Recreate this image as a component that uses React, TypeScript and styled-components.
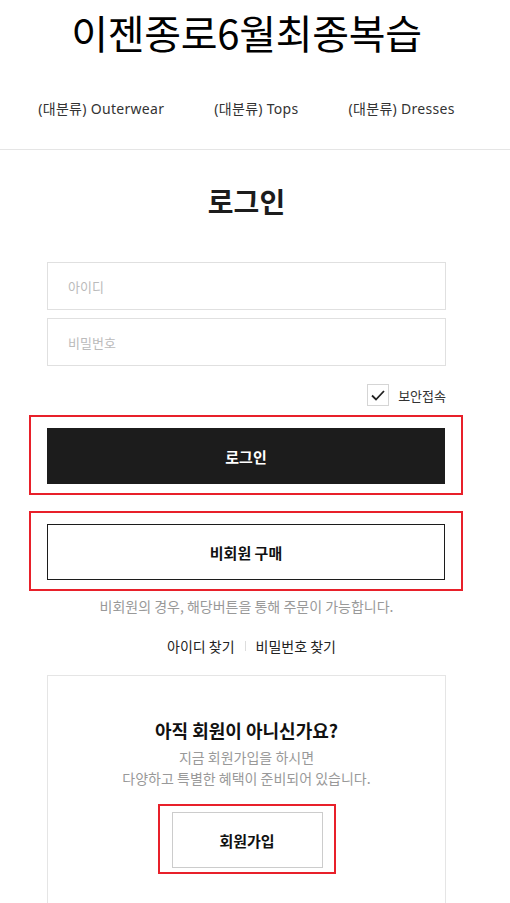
import styled, { createGlobalStyle } from "styled-components";

const GlobalStyle = createGlobalStyle`
  html, body {
    margin: 0;
    padding: 0;
    background: #fff;
  }
  body {
    font-family: "Noto Sans CJK KR", "Noto Sans", sans-serif;
    color: #222;
  }
`;

const Page = styled.div`
  width: 510px;
  height: 903px;
  overflow: hidden;
`;

const Header = styled.header`
  width: 493px;
  display: flex;
  flex-direction: column;
  align-items: center;
`;

const Logo = styled.h1`
  margin: 0;
  height: 66px;
  font-size: 40px;
  font-weight: 400;
  line-height: 64px;
  color: #000;
  letter-spacing: -0.3px;
`;

const Nav = styled.nav`
  display: flex;
  gap: 50px;
  height: 83px;
  align-items: center;
`;

const NavItem = styled.a`
  font-family: "Noto Sans", "Noto Sans CJK KR", sans-serif;
  font-size: 14px;
  letter-spacing: 0.3px;
  color: #333;
  text-decoration: none;
`;

const Divider = styled.hr`
  margin: 0;
  border: 0;
  border-top: 1px solid #e5e5e5;
`;

const Content = styled.main`
  width: 399px;
  margin-left: 47px;
  display: flex;
  flex-direction: column;
`;

const Title = styled.h2`
  margin: 0;
  padding-top: 31px;
  height: 48px;
  text-align: center;
  font-size: 28px;
  font-weight: 700;
  line-height: 40px;
  color: #1c1c1c;
`;

const Field = styled.input<{ $top: number }>`
  box-sizing: border-box;
  width: 100%;
  height: 48px;
  margin-top: ${(p) => p.$top}px;
  border: 1px solid #e0e0e0;
  padding: 0 20px;
  font-family: inherit;
  font-size: 13px;
  outline: none;
  &::placeholder {
    color: #bbb;
  }
`;

const SecureRow = styled.label`
  display: flex;
  justify-content: flex-end;
  align-items: center;
  gap: 9px;
  margin-top: 18px;
  font-size: 13px;
  color: #333;
`;

const CheckBox = styled.span`
  box-sizing: border-box;
  width: 22px;
  height: 22px;
  border: 1px solid #d5d5d5;
  display: flex;
  align-items: center;
  justify-content: center;
`;

const Highlight = styled.div<{ $top: number }>`
  margin: ${(p) => p.$top}px -17px 0 -18px;
  padding: 11px 16px 9px 16px;
  border: 2px solid #e8202a;
`;

const Button = styled.button<{ $dark?: boolean }>`
  box-sizing: border-box;
  width: 100%;
  height: 56px;
  display: flex;
  align-items: center;
  justify-content: center;
  font-family: inherit;
  font-size: 15px;
  font-weight: 700;
  cursor: pointer;
  background: ${(p) => (p.$dark ? "#1c1c1c" : "#fff")};
  color: ${(p) => (p.$dark ? "#fff" : "#111")};
  border: 1px solid #1c1c1c;
`;

const Notice = styled.p`
  margin: 5px 0 0;
  text-align: center;
  font-size: 14px;
  color: #999;
  line-height: 20px;
`;

const FindLinks = styled.div`
  display: flex;
  justify-content: center;
  align-items: center;
  margin-top: 20px;
  padding-left: 10px;
  font-size: 14px;
  line-height: 20px;
  color: #222;
`;

const Sep = styled.span`
  display: inline-block;
  width: 1px;
  height: 10px;
  background: #ddd;
  margin: 0 10px;
`;

const JoinBox = styled.section`
  margin-top: 19px;
  border: 1px solid #e5e5e5;
  border-bottom: 0;
  padding: 41px 0 40px;
  display: flex;
  flex-direction: column;
  align-items: center;
`;

const JoinTitle = styled.h3`
  margin: 0;
  font-size: 18px;
  font-weight: 700;
  line-height: 26px;
  color: #111;
`;

const JoinText = styled.p`
  margin: 4px 0 0;
  text-align: center;
  font-size: 14px;
  line-height: 21px;
  color: #999;
`;

const JoinHighlight = styled.div`
  margin-top: 15px;
  padding: 6px 11px 4px 12px;
  border: 2px solid #e8202a;
`;

const JoinButton = styled.button`
  box-sizing: border-box;
  width: 151px;
  height: 56px;
  background: #fff;
  border: 1px solid #ccc;
  font-family: inherit;
  font-size: 15px;
  font-weight: 700;
  color: #111;
  cursor: pointer;
`;

export default function App() {
  return (
    <Page>
      <GlobalStyle />
      <Header>
        <Logo>이젠종로6월최종복습</Logo>
        <Nav>
          <NavItem href="#">(대분류) Outerwear</NavItem>
          <NavItem href="#">(대분류) Tops</NavItem>
          <NavItem href="#">(대분류) Dresses</NavItem>
        </Nav>
      </Header>
      <Divider />
      <Content>
        <Title>로그인</Title>
        <Field $top={33} placeholder="아이디" />
        <Field $top={8} type="password" placeholder="비밀번호" />
        <SecureRow>
          <CheckBox>
            <svg width="14" height="11" viewBox="0 0 14 11">
              <path d="M1 5.5 L5 9.5 L13 1" fill="none" stroke="#222" strokeWidth="1.8" />
            </svg>
          </CheckBox>
          보안접속
        </SecureRow>
        <Highlight $top={9}>
          <Button $dark>로그인</Button>
        </Highlight>
        <Highlight $top={16}>
          <Button>비회원 구매</Button>
        </Highlight>
        <Notice>비회원의 경우, 해당버튼을 통해 주문이 가능합니다.</Notice>
        <FindLinks>
          <span>아이디 찾기</span>
          <Sep />
          <span>비밀번호 찾기</span>
        </FindLinks>
        <JoinBox>
          <JoinTitle>아직 회원이 아니신가요?</JoinTitle>
          <JoinText>
            지금 회원가입을 하시면
            <br />
            다양하고 특별한 혜택이 준비되어 있습니다.
          </JoinText>
          <JoinHighlight>
            <JoinButton>회원가입</JoinButton>
          </JoinHighlight>
        </JoinBox>
      </Content>
    </Page>
  );
}
